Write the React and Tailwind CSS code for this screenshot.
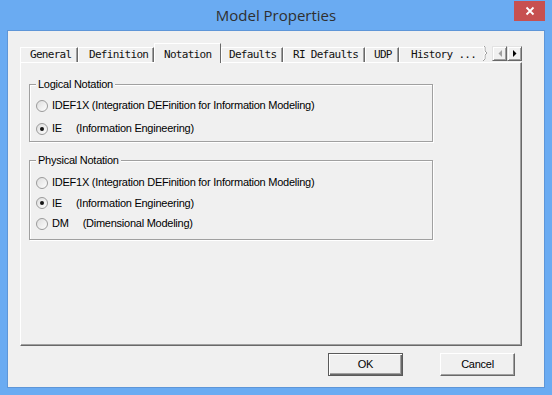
import React from "react";

const tabs = [
  { label: "General", cls: "w-[58px] pl-[9px]" },
  { label: "Definition", cls: "w-[76px] pl-[10px]" },
  { label: "Notation", cls: "w-[67px] pl-[9px]", sel: true },
  { label: "Defaults", cls: "w-[62px] pl-[7px]" },
  { label: "RI Defaults", cls: "w-[82px] pl-[9px]" },
  { label: "UDP", cls: "w-[34px] pl-[8px]" },
  { label: "History ...", cls: "w-[85px] pl-[11px]", cut: true },
];

function Radio({ checked }) {
  return (
    <svg width="12" height="12" viewBox="0 0 12 12" className="shrink-0">
      <defs>
        <linearGradient id="rg" x1="0" y1="0" x2="1" y2="1">
          <stop offset="0" stopColor="#dcdcdc" />
          <stop offset="1" stopColor="#ffffff" />
        </linearGradient>
      </defs>
      <circle cx="6" cy="6" r="5.5" fill="url(#rg)" stroke="#9a9a9a" strokeWidth="1" />
      {checked && <circle cx="6" cy="6" r="2" fill="#141414" />}
    </svg>
  );
}

function Row({ checked, children, h }) {
  return (
    <div className={`flex items-center pl-[6px] ${h}`}>
      <Radio checked={checked} />
      <span className="ml-[4px] whitespace-pre">{children}</span>
    </div>
  );
}

function Group({ title, mt, children, pad }) {
  return (
    <fieldset
      className={`ml-[8px] ${mt} w-[404px] border border-[#a0a0a0] shadow-[inset_1px_1px_0_#ffffff,1px_1px_0_#ffffff] p-0 ${pad}`}
    >
      <legend className="ml-[6px] px-[2px] h-[13px] leading-[13px] bg-[#f0f0f0]">{title}</legend>
      {children}
    </fieldset>
  );
}

function SpinBtn({ dir }) {
  return (
    <div className="w-[15px] h-[15px] bg-[#f0f0f0] border-t border-l border-[#e3e3e3] border-r border-b border-r-[#696969] border-b-[#696969] shadow-[inset_1px_1px_0_#ffffff,inset_-1px_-1px_0_#a0a0a0] flex items-center justify-center">
      {dir === "left" ? (
        <svg width="4" height="7" viewBox="0 0 4 7">
          <polygon points="4,0 4,7 0.5,3.5" fill="#a0a0a0" />
        </svg>
      ) : (
        <svg width="4" height="7" viewBox="0 0 4 7">
          <polygon points="0,0 0,7 3.5,3.5" fill="#000000" />
        </svg>
      )}
    </div>
  );
}

export default function App() {
  return (
    <div className="w-[552px] h-[395px] bg-[#6aabf2] flex flex-col font-['Liberation_Sans',Arial,sans-serif] text-[11px] tracking-[-0.25px] text-black">
      {/* Title bar */}
      <div className="h-[31px] grid grid-cols-[1fr_auto_1fr] shrink-0">
        <div />
        <div className="self-center text-[15px] tracking-normal text-[#2f2f2f] font-['Open_Sans','Noto_Sans',sans-serif] leading-[20px] -mt-[1px]">
          Model Properties
        </div>
        <div className="justify-self-end self-start mt-[1px] mr-[7px] w-[31px] h-[20px] bg-[#c75050] flex items-center justify-center">
          <svg width="10" height="10" viewBox="0 0 10 10">
            <path d="M1.5 1.5 L8.5 8.5 M8.5 1.5 L1.5 8.5" stroke="#ffffff" strokeWidth="1.8" />
          </svg>
        </div>
      </div>

      {/* Client area */}
      <div className="mx-[8px] h-[356px] bg-[#f0f0f0] shadow-[0_0_0_1px_#5e96d8] flex flex-col">
        <div className="ml-[12px] mt-[12px] w-[502px]">
          {/* Tab strip */}
          <div className="h-[19px] flex items-end font-['DejaVu_Sans_Mono',monospace] text-[11px] tracking-[-0.7px] text-[#111]">
            {tabs.map((t) =>
              t.sel ? (
                <div
                  key={t.label}
                  className={`${t.cls} h-[20px] -mb-[1px] pb-[1px] relative z-10 bg-[#f0f0f0] border-t border-l border-white border-r border-r-[#696969] flex flex-col justify-end shrink-0`}
                >
                  <span className="h-[14px] leading-[14px] whitespace-pre">{t.label}</span>
                </div>
              ) : t.cut ? (
                <div key={t.label} className="flex items-end shrink-0">
                  <div
                    className={`${t.cls} h-[15px] border-t border-l border-white flex flex-col justify-end`}
                  >
                    <span className="h-[14px] leading-[14px] whitespace-pre">{t.label}</span>
                  </div>
                  <svg width="6" height="16" viewBox="0 0 6 16" className="-ml-[1px]">
                    <path
                      d="M1 0 L2 1 L2 5 L4 7 L2 9 L2 13 L0 15"
                      fill="none"
                      stroke="#a0a0a0"
                      strokeWidth="1"
                    />
                    <path
                      d="M0 0 L1 1 L1 5 L3 7 L1 9 L1 13 L-1 15"
                      fill="none"
                      stroke="#ffffff"
                      strokeWidth="1"
                    />
                  </svg>
                </div>
              ) : (
                <div
                  key={t.label}
                  className={`${t.cls} h-[15px] border-t border-l border-white border-r border-r-[#696969] shadow-[inset_-1px_0_0_#a0a0a0] flex flex-col justify-end shrink-0`}
                >
                  <span className="h-[14px] leading-[14px] whitespace-pre">{t.label}</span>
                </div>
              )
            )}
            <div className="flex-1" />
            <div className="flex mb-[1px]">
              <SpinBtn dir="left" />
              <SpinBtn dir="right" />
            </div>
          </div>

          {/* Panel */}
          <div className="h-[284px] border-t border-l border-white border-r border-b border-r-[#696969] border-b-[#696969] shadow-[inset_-1px_-1px_0_#a0a0a0] flex flex-col">
            <Group title="Logical Notation" mt="mt-[15px]" pad="pt-[3px] pb-[1px]">
              <Row h="h-[23px]">IDEF1X (Integration DEFinition for Information Modeling)</Row>
              <Row h="h-[23px]" checked>
                {"IE     (Information Engineering)"}
              </Row>
            </Group>
            <Group title="Physical Notation" mt="mt-[12px]" pad="pt-[5px] pb-[5px]">
              <Row h="h-[21px]">IDEF1X (Integration DEFinition for Information Modeling)</Row>
              <Row h="h-[20px]" checked>
                {"IE     (Information Engineering)"}
              </Row>
              <Row h="h-[21px]">{"DM     (Dimensional Modeling)"}</Row>
            </Group>
          </div>
        </div>

        {/* Buttons */}
        <div className="flex justify-end gap-[37px] pr-[29px] mt-[7px]">
          <button className="w-[75px] h-[23px] bg-[#f0f0f0] border border-[#5a5a5a] shadow-[inset_1px_1px_0_#ffffff,inset_-1px_-1px_0_#696969,inset_-2px_-2px_0_#a0a0a0] text-[11px] leading-[21px] tracking-[-0.25px]">
            OK
          </button>
          <button className="w-[75px] h-[23px] bg-[#f0f0f0] border-t border-l border-white border-r border-b border-r-[#696969] border-b-[#696969] shadow-[inset_-1px_-1px_0_#a0a0a0] text-[11px] leading-[21px] tracking-[-0.25px]">
            Cancel
          </button>
        </div>
      </div>
    </div>
  );
}
